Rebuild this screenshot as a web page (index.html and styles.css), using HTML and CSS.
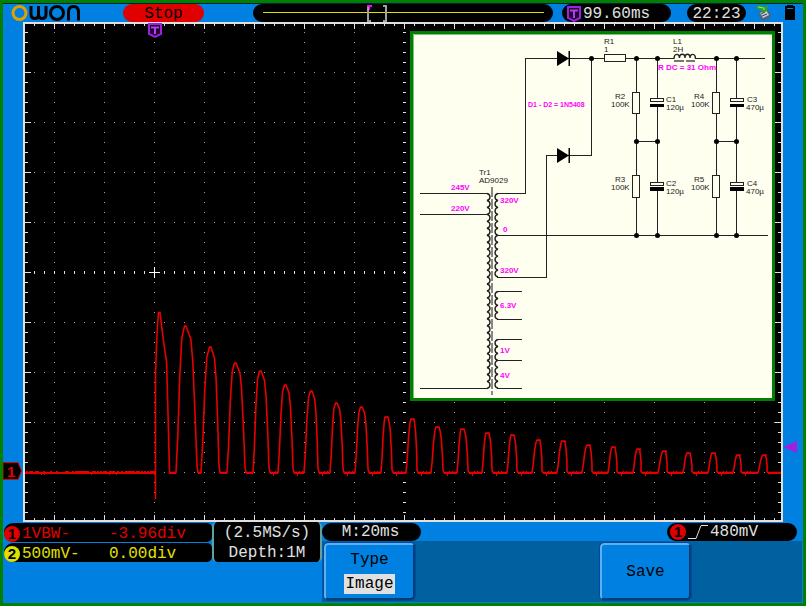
FILE: index.html
```html
<!DOCTYPE html>
<html lang="en">
<head>
<meta charset="utf-8">
<title>Oscilloscope</title>
<link rel="stylesheet" href="styles.css">
</head>
<body>
<header class="top">
  <svg class="logo" viewBox="0 0 80 18" role="img" aria-label="owon">
    <circle cx="16.500" cy="9" r="6.500" stroke="#e0a000"/>
    <path d="M28 2V10Q28 14.500 32 14.500Q35.500 14.500 35.500 10V2M35.500 10Q35.500 14.500 39 14.500Q43 14.500 43 10V2M65.500 16.500V8Q65.500 2.500 70.500 2.500Q75.500 2.500 75.500 8V16.500" stroke="#000"/>
    <circle cx="54" cy="9" r="6.500" stroke="#000"/>
  </svg>
  <span class="pill stop">Stop</span>
  <svg class="record" viewBox="0 0 300 18" preserveAspectRatio="none" aria-hidden="true">
    <rect width="300" height="18" rx="9"/>
    <path d="M10 8.500H291" stroke="#e0e000"/>
    <path d="M118 2H115V17H118M130 2H133V17H130" fill="none" stroke="#a0a0a0" stroke-width="2"/>
    <path d="M114 1H119V3H117V6H116V3H114Z" fill="#f0f"/>
  </svg>
  <span class="pill delay">
    <svg class="tmark" viewBox="0 0 14 16" aria-hidden="true"><path d="M1 1H13V12L7 15L1 12Z" fill="#200030" stroke="#a020e0" stroke-width="2"/><path d="M3 4.500H11M7 4V12" stroke="#b040f0" stroke-width="2"/></svg>99.60ms</span>
  <time class="pill clock">22:23</time>
  <svg class="usb" viewBox="0 0 16 17" aria-hidden="true">
    <path d="M3 8L11 5L15 11L14 14L7 17L3 12Z" fill="#506080"/><path d="M4 9L10 6L13 11L7 14Z" fill="#c0d0d0"/><path d="M6 12L11 10M5 10L9 8" stroke="#304050"/>
    <path d="M0 2L6 1L7 3L12 1L11 7L6 9L5 6L1 5Z" fill="#30a030"/><path d="M2 3L8 4L8 6" stroke="#90f040" fill="none"/>
  </svg>
  <svg class="battery" viewBox="0 0 10 16" aria-hidden="true"><path d="M0 1H10V16H0Z"/><path d="M2 4H8V5H2Z" fill="#0080e0"/><path d="M0 1H2V2H0ZM8 1H10V2H8Z" fill="#0080e0"/></svg>
</header>

<main>
<svg class="scope" viewBox="3 22 800 500" role="img" aria-label="Waveform and schematic">
  <rect x="24" y="23" width="758" height="498" fill="#000" stroke="#e0e0e0" stroke-width="2"/>
  <g id="graticule" shape-rendering="crispEdges"></g>
  <path d="M149 272.500H160M154.500 267V278" stroke="#fff" shape-rendering="crispEdges"/>
  <g fill="none" stroke="#e80000">
    <path d="M25 473H156" stroke-width="2"/>
    <path id="trace" stroke-width="1.600"/>
    <path id="noise" shape-rendering="crispEdges"/>
  </g>
  <path d="M149 24H161V34L155 37L149 34Z" fill="#200030" stroke="#a020e0" stroke-width="2"/>
  <path d="M151 27.500H159M155 27V34" stroke="#b040f0" stroke-width="2"/>
  <path d="M3 462.500H18L21.500 471L18 479.500H3Z" fill="#000" stroke="#e00000"/>
  <text class="base" x="7" y="477">1</text>
  <path d="M783 447L797 441V453Z" fill="#a020e0"/>

  <g class="schematic">
    <rect x="411.500" y="32.500" width="362" height="367" fill="#fffff0" stroke="#008000" stroke-width="3"/>
    <path d="M413.500 398V34.500H772" fill="none" stroke="#80c080"/>
    <g class="wire" shape-rendering="crispEdges">
      <path d="M497 193.500H525.500V58.500H765M497 277.500H546.500V155.500H591.500V58.500M497 235.500H768"/>
      <path d="M420 193.500H488M420 214.500H488M420 388.500H488M497 291.500H522M497 319.500H522M497 339.500H522M497 360.500H522M497 388.500H522"/>
      <path d="M636.500 58V235M657 58V235M716.500 58V235M736.500 58V235M636 141.500H657M716 141.500H737"/>
      <path d="M492 187V395" stroke="#888" stroke-width="2" stroke-dasharray="10 2"/>
    </g>
    <g id="coils" class="wire coil"></g>
    <path d="M557 51L569 58.500L557 66ZM557 148L569 155.500L557 163ZM568.500 51H570V66H568.500ZM568.500 148H570V163H568.500Z"/>
    <g class="part" shape-rendering="crispEdges">
      <rect x="604.500" y="54.500" width="21" height="7"/>
      <rect x="632.500" y="92.500" width="7" height="21"/><rect x="632.500" y="175.500" width="7" height="22"/>
      <rect x="712.500" y="92.500" width="7" height="21"/><rect x="712.500" y="175.500" width="7" height="22"/>
      <rect x="650.500" y="98.500" width="13" height="3"/><rect x="650.500" y="182.500" width="13" height="3"/>
      <rect x="730.500" y="98.500" width="13" height="3"/><rect x="730.500" y="182.500" width="13" height="3"/>
    </g>
    <path d="M649 102H665V104H649ZM649 186H665V187H649ZM729 102H745V104H729ZM729 186H745V187H729Z" fill="#fffff0"/>
    <path d="M650 104H664V107H650ZM650 187H664V191H650ZM730 104H744V107H730ZM730 187H744V191H730Z"/>
    <path d="M674 57H695V60H674Z" fill="#fffff0"/>
    <path class="wire coil" d="M674 59C674 53 679.500 53 679.500 58C679.500 53 685 53 685 58C685 53 690 53 690 58C690 53 695.500 53 695.500 59"/>
    <path d="M674 60H684V62H674ZM686 60H695V62H686Z" fill="#777"/>
    <g id="nodes"></g>
    <g class="label">
      <text x="604" y="44">R1</text><text x="604" y="52">1</text>
      <text x="673" y="44">L1</text><text x="673" y="52">2H</text>
      <text x="615" y="99">R2</text><text x="611" y="107">100K</text>
      <text x="694" y="99">R4</text><text x="691" y="107">100K</text>
      <text x="666" y="102">C1</text><text x="666" y="110">120µ</text>
      <text x="747" y="102">C3</text><text x="746" y="110">470µ</text>
      <text x="615" y="182">R3</text><text x="611" y="190">100K</text>
      <text x="694" y="182">R5</text><text x="691" y="190">100K</text>
      <text x="666" y="186">C2</text><text x="666" y="194">120µ</text>
      <text x="747" y="186">C4</text><text x="746" y="194">470µ</text>
      <text x="479" y="175">Tr1</text><text x="479" y="183">AD9029</text>
    </g>
    <g class="volts">
      <text class="diodes" x="528" y="107">D1 - D2 = 1N5408</text><text x="658" y="70">R DC = 31 Ohm</text>
      <text x="451" y="190">245V</text><text x="451" y="211">220V</text>
      <text x="500" y="203">320V</text><text x="503" y="232">0</text><text x="500" y="273">320V</text>
      <text x="500" y="308">6.3V</text><text x="500" y="353">1V</text><text x="500" y="378">4V</text>
    </g>
  </g>
</svg>
</main>

<footer class="bottom">
  <div class="channels">
    <div class="channel red"><b class="badge">1</b><span>1VBW-</span><span>-3.96div</span></div>
    <div class="channel yellow"><b class="badge">2</b><span>500mV-</span><span>0.00div</span></div>
  </div>
  <div class="sampling"><span>(2.5MS/s)</span><span>Depth:1M</span></div>
  <div class="right">
    <div class="status">
      <span class="pill timebase">M:20ms</span>
      <span class="pill trigger"><b class="badge">1</b><svg class="edge" viewBox="0 0 20 16" aria-hidden="true"><path d="M0 14.500H8L13 1.500H20" fill="none" stroke="#e0e0e0" stroke-width="1"/></svg>480mV</span>
    </div>
    <div class="menu">
      <button class="key type" type="button"><span>Type</span><span class="choice">Image</span></button>
      <button class="key save" type="button">Save</button>
    </div>
  </div>
</footer>
<script src="scope.js"></script>
</body>
</html>
```
FILE: styles.css
```css
* { box-sizing: border-box; }
body {
  margin: 0;
  border: 3px solid #008000;
  background: #0080e0;
  color: #e0e0e0;
  font: 16px/20px "Liberation Mono", monospace;
}
svg { display: block; }
.top {
  display: flex;
  height: 19px;
  border-top: 1px solid #002040;
}
.pill {
  display: flex;
  align-items: center;
  justify-content: center;
  height: 18px;
  border-radius: 9px;
  background: #000;
  line-height: 20px;
}
.top .pill { padding-top: 2px; }
.logo { width: 80px; height: 18px; fill: none; stroke-width: 3; }
.stop { width: 81px; margin: 0 49px 0 40px; background: #e00000; color: #000; }
.record { flex: 1; min-width: 0; height: 18px; }
.delay { width: 109px; margin-left: 9px; padding-right: 16px; }
.tmark { width: 14px; height: 16px; margin-right: 2px; }
.clock { width: 59px; margin: 0 10px 0 16px; }
.usb { width: 16px; height: 17px; margin-right: 13px; }
.battery { width: 10px; height: 16px; margin-right: 8px; }

.scope { width: 100%; height: auto; }
.base { font: bold 15px "Liberation Sans", sans-serif; fill: #e00000; }
.wire { fill: none; stroke: #222; }
.coil { stroke-width: 1.4; }
.part { fill: #fffff0; stroke: #222; }
.label { font: 8px "Liberation Sans", sans-serif; fill: #222; }
.volts { font: bold 8px "Liberation Sans", sans-serif; fill: #f0f; }
.diodes { font-size: 7px; }

.bottom { display: flex; height: 81px; }
.channels { width: 208px; margin-left: 1px; padding-top: 1px; }
.channel {
  display: grid;
  grid-template-columns: 18px 87px 1fr;
  align-items: center;
  height: 19px;
  margin-bottom: 1px;
  border-radius: 9px 5px 5px 9px;
  background: #000;
  line-height: 22px;
}
.badge {
  width: 16px;
  height: 16px;
  border-radius: 8px;
  background: #e00000;
  color: #000;
  font: bold 15px/16px "Liberation Sans", sans-serif;
  text-align: center;
}
.red { color: #e00000; }
.yellow { color: #e0e000; }
.yellow .badge { background: #e0e000; }
.sampling {
  display: flex;
  flex-direction: column;
  width: 110px;
  height: 40px;
  padding-top: 1px;
  border: solid #60a0a0;
  border-width: 0 2px;
  background: #000;
  border-radius: 5px;
  line-height: 20px;
  text-align: center;
}
.right { flex: 1; padding-right: 1px; }
.status { display: flex; justify-content: space-between; padding: 1px 5px 0 0; }
.timebase { width: 99px; padding-right: 2px; }
.trigger { width: 130px; justify-content: flex-start; padding-left: 3px; }
.edge { width: 20px; height: 16px; margin: 0 2px; }
.menu {
  display: grid;
  grid-template-columns: repeat(5, 1fr);
  gap: 1px;
  height: 61px;
  padding: 2px 19px 2px 2px;
  background: #0060a0;
}
.key {
  display: flex;
  flex-direction: column;
  align-items: center;
  justify-content: center;
  gap: 4px;
  padding: 0;
  border: 2px solid;
  border-color: #60b0f0 #004070 #004070 #60b0f0;
  border-radius: 4px;
  outline: 1px solid #0048a8;
  background: #0080e0;
  color: #000;
  font: inherit;
  line-height: 20px;
}
.save { grid-column: 4; }
.choice { padding: 0 1px; background: #e0e0e0; }
```
FILE: scope.js
```js
const set = (id, d) => document.getElementById(id).setAttribute('d', d);

// Graticule: dotted divisions, edge ticks and centre axes
const rows = [], cols = [], majorX = [], majorY = [];
for (let x = 54; x < 780; x += 50) { cols.push(`M${x}.5 32V515`); majorX.push(`M${x}.5 24V29M${x}.5 515V520`); }
for (let y = 72; y < 520; y += 50) { rows.push(`M34 ${y}.5H775`); majorY.push(`M25 ${y}.5H31M775 ${y}.5H781`); }
const line = (d, color, width, dash) =>
  `<path d="${d}" fill="none" stroke="${color}" stroke-width="${width}" ${dash ? 'stroke-dasharray="1 9"' : ''}/>`;
document.getElementById('graticule').innerHTML =
  line(cols.join('') + rows.join(''), '#a0a0a0', 1, true) +
  line('M34 25H780M34 519H780', '#e0e0e0', 2, true) +
  line('M26.5 32V515M779.5 32V515M404.500 32V515M34 272.500H775', '#e0e0e0', 3, true) +
  line(majorX.join('') + majorY.join(''), '#e0e0e0', 1, false);

// Decaying pulses: base start, crest x, base end, crest y
const pulses = [
  [176, 185, 198, 326], [201, 210, 220, 347], [227, 235, 246, 363], [253, 260, 270, 371],
  [278, 285, 294, 385], [304, 311, 319, 391], [330, 336, 344, 403], [355, 361, 369, 407],
  [381, 386, 393, 417], [406, 412, 418, 419], [431, 437, 444, 427], [457, 462, 469, 429],
  [482, 487, 493, 433], [507, 512, 518, 435], [532, 538, 543, 440], [557, 563, 568, 441],
  [582, 588, 593, 445], [608, 613, 618, 447], [633, 638, 642, 449], [658, 664, 668, 451],
  [683, 688, 693, 453], [708, 713, 718, 453], [733, 738, 742, 455], [758, 764, 768, 455]
];
let trace = 'M155.5 499V376L156.5 345L157.5 325L158.5 312.5H160L161.5 325L163.5 341L165.5 355L166.5 361L168 413L169.5 472.5';
let noise = '';
pulses.forEach(([a, c, b, top], i) => {
  const y = k => 472.5 - k * (472.5 - top);
  const l = c - a, r = b - c, flat = i > 7 ? 2 : 1;
  trace += `H${a}L${a + l * 0.2} ${y(0.25)}L${a + l * 0.42} ${y(0.66)}L${a + l * 0.65} ${y(0.92)}L${c - flat / 2} ${y(1)}H${c + flat}` +
    `L${c + r * 0.45} ${y(0.91)}L${c + r * 0.6} ${y(0.76)}L${c + r * 0.78} ${y(0.38)}L${b - 1} ${y(0.05)}L${b} 472.5`;
  noise += `M${c - 1} ${top}.5h${flat + 1}`;
});
trace += 'H781';
const ends = [169, ...pulses.map(p => p[2])];
ends.forEach((x, i) => {
  noise += `M${x} 473.500H${pulses[i] ? pulses[i][0] : 781}`;
  if (i > 3 && i < 24) noise += `M${x + 5}.5 471v1M${x + 8}.5 471v1M${x + 3}.5 474v2`;
});
for (const x of [26, 29, 31, 35, 37, 43, 50, 56, 65, 67, 72, 75, 77, 79, 81, 83, 85, 87, 92, 94, 97, 100, 103, 105, 109, 111, 113, 117, 121, 125, 127, 129, 131, 133, 136, 138, 141, 144, 147, 150, 152, 154])
  noise += `M${x} 471.500h2`;
for (const x of [41, 44, 91, 109, 116, 154]) noise += `M${x} 474.500h1`;
set('trace', trace);
set('noise', noise);

// Transformer windings
const coil = (x, y, turns, sweep) => `<path d="M${x} ${y}${`a4 3.600 0 0 ${sweep} 0 6.960`.repeat(turns)}"/>`;
document.getElementById('coils').innerHTML =
  coil(487, 193.5, 28, 1) + coil(498, 193.5, 12, 0) + coil(498, 291.5, 4, 0) + coil(498, 339.5, 7, 0);

// Junctions
const nodes = [[591, 58]];
for (const x of [636, 657, 716, 736]) for (const y of [58, 141, 235]) nodes.push([x, y]);
document.getElementById('nodes').innerHTML =
  nodes.map(([x, y]) => `<circle cx="${x + 0.5}" cy="${y + 0.5}" r="2.500"/>`).join('');
```
